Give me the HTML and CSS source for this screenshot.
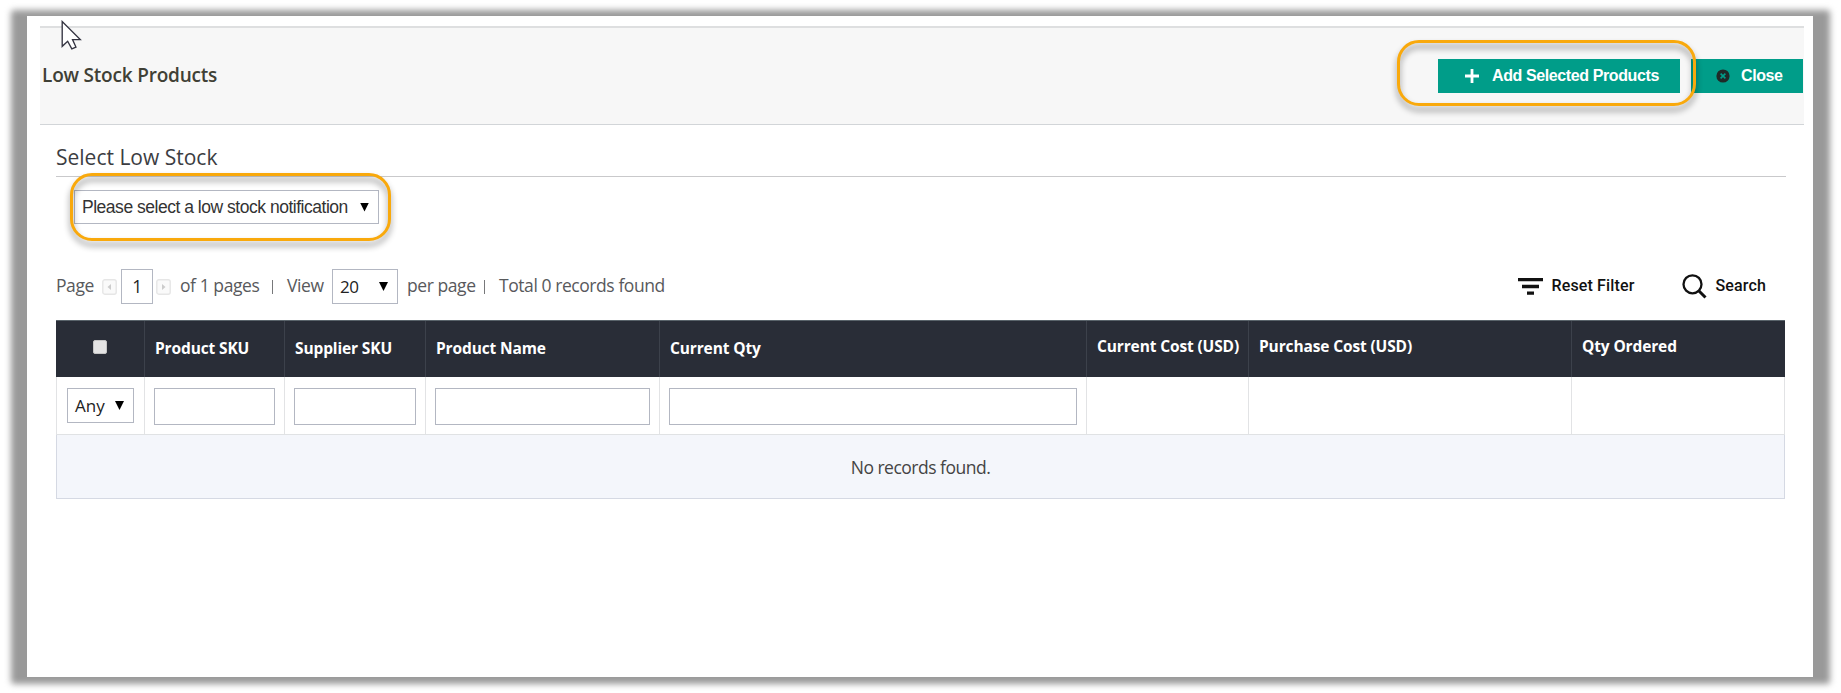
FILE: index.html
```html
<!DOCTYPE html>
<html lang="en">
<head>
<meta charset="utf-8">
<title>Low Stock Products</title>
<link rel="stylesheet" href="styles.css">
</head>
<body>
<div class="frame">
  <main class="sheet">
    <header class="titlebar">
      <h1>Low Stock Products</h1>
      <div class="actions">
        <button class="btn add">
          <svg class="plus" viewBox="0 0 14 14"><path d="M7 0v14M0 7h14" stroke="#fff" stroke-width="2.8"/></svg>
          <span class="t-add">Add Selected Products</span>
        </button>
        <button class="btn close">
          <svg class="x" viewBox="0 0 14 14"><circle cx="7" cy="7" r="6.6" fill="#1f2a28"/><path d="M4.6 4.6l4.8 4.8M9.4 4.6l-4.8 4.8" stroke="#009d89" stroke-width="1.6"/></svg>
          <span class="t-close">Close</span>
        </button>
      </div>
    </header>
    <section class="content">
      <h2><span>Select Low Stock</span></h2>
      <div class="dropdown notify"><span class="t-notify">Please select a low stock notification</span><i class="caret"></i></div>
      <div class="toolbar">
        <span class="t-page">Page</span>
        <svg class="nav prev" viewBox="0 0 15 16"><rect x=".8" y=".8" width="13.4" height="14.4" rx="2" fill="#fafafa" stroke="#e6e6e6" stroke-width="1.4"/><path d="M9 5v6L5.500 8z" fill="#ccc"/></svg>
        <span class="pagebox">1</span>
        <svg class="nav next" viewBox="0 0 15 16"><rect x=".8" y=".8" width="13.4" height="14.4" rx="2" fill="#fafafa" stroke="#e6e6e6" stroke-width="1.4"/><path d="M6 5v6L9.500 8z" fill="#ccc"/></svg>
        <span class="t-of">of 1 pages</span>
        <i class="bar bar1"></i>
        <span class="t-view">View</span>
        <div class="dropdown size"><span>20</span><i class="caret"></i></div>
        <span class="t-per">per page</span>
        <i class="bar bar2"></i>
        <span class="t-total">Total 0 records found</span>
        <div class="tools">
          <svg class="filter" viewBox="0 0 25 17"><path d="M0 1.700h25M4 8.500h17M9 15.200h7" stroke="#111" stroke-width="3.300"/></svg>
          <b class="t-reset">Reset Filter</b>
          <svg class="lens" viewBox="0 0 25 25"><circle cx="10.500" cy="10.300" r="9" fill="none" stroke="#111" stroke-width="2.300"/><path d="M16.500 16.500l7 7" stroke="#111" stroke-width="3"/></svg>
          <b class="t-search">Search</b>
        </div>
      </div>
      <div class="grid">
        <div class="row head">
          <div class="check"><i class="box"></i></div>
          <div><span class="h1">Product SKU</span></div>
          <div><span class="h2">Supplier SKU</span></div>
          <div><span class="h3">Product Name</span></div>
          <div><span class="h4">Current Qty</span></div>
          <div class="up"><span class="h5">Current Cost (USD)</span></div>
          <div class="up"><span class="h6">Purchase Cost (USD)</span></div>
          <div class="up"><span class="h7">Qty Ordered</span></div>
        </div>
        <div class="row filters">
          <div><div class="dropdown any"><span>Any</span><i class="caret"></i></div></div>
          <div><i class="field"></i></div>
          <div><i class="field"></i></div>
          <div><i class="field"></i></div>
          <div><i class="field"></i></div>
          <div></div><div></div><div></div>
        </div>
        <div class="empty"><span class="t-none">No records found.</span></div>
      </div>
    </section>
  </main>
</div>
<div class="callout callout-add"></div>
<div class="callout callout-select"></div>
<svg class="cursor" viewBox="0 0 20 30"><path d="M1 1.500V25.500L6.300 20.600L10.300 28L14.300 26.200L11 19H18.500Z" fill="#fff" stroke="#333340" stroke-width="1.300"/></svg>
</body>
</html>
```

FILE: styles.css
```css
* { box-sizing: border-box; }
body { margin: 0; height: 693px; background: #fff; overflow: hidden; position: relative;
  font-family: "Open Sans", "Noto Sans", sans-serif; }
h1, h2 { margin: 0; font-weight: 400; }
span, b { white-space: nowrap; }
svg, i { display: block; flex: none; }
.frame { position: relative; height: 693px; padding: 16px 28px 16px 27px; }
.frame::before { content: ""; position: absolute; inset: 10px 11px 9px 11px; background: #999; border-radius: 3px; filter: blur(3px); }
.sheet { position: relative; height: 661px; background: #fff; padding: 10px 9px 0 13px; }

.titlebar { height: 99px; background: #f7f7f7; border-top: 2px solid #dedfe0; border-bottom: 1px solid #d2d5d8;
  display: flex; justify-content: space-between; padding-left: 2px; padding-right: 1px; }
h1 { font-size: 19px; font-weight: 600; line-height: 26px; letter-spacing: -.2px; color: #3f4035; margin-top: 34px; }
.actions { display: flex; gap: 11px; margin-top: 31px; }
.btn { height: 34px; border: 0; padding: 0 0 1px; background: #009d89; color: #fff; display: flex; align-items: center;
  font: bold 16px "Liberation Sans", Arial, sans-serif; letter-spacing: -.39px; }
.add { width: 242px; padding-left: 27px; }
.close { width: 112px; padding-left: 25px; }
.plus { width: 14px; height: 14px; margin-right: 13px; }
.x { width: 14px; height: 14px; margin-right: 11px; }

.content { padding: 0 18px 0 16px; }
h2 { height: 52px; padding-top: 18px; font-size: 21px; line-height: 28px; color: #3c3d42; border-bottom: 1px solid #c9c9cb; }
.dropdown { display: flex; align-items: center; justify-content: space-between; background: #fff; border: 1px solid #b3b7c2; color: #222; font-size: 17px; }
.caret { width: 9px; height: 9px; background: #000; clip-path: polygon(0 0, 100% 0, 50% 100%); }
.notify { width: 305px; height: 34px; margin: 13px 0 0 18px; padding: 0 9px 0 7px; font-family: "Liberation Sans", Arial, sans-serif; font-size: 17.5px; letter-spacing: -.48px; color: #333; }
.notify span { padding-top: 1px; }

.toolbar { display: flex; align-items: center; height: 35px; margin-top: 45px; color: #58595c; font-size: 17.5px; letter-spacing: -.43px; }
.toolbar > span { line-height: 24px; padding-bottom: 3px; }
.nav { width: 15px; height: 16px; }
.t-page { width: 46px; }
.toolbar > .pagebox { width: 32px; height: 35px; margin: 0 3px 0 4px; border: 1px solid #b3b7c2; color: #222; text-align: center; padding-top: 4px; }
.t-of { margin-left: 9px; width: 92px; }
.bar { width: 1px; height: 14px; background: #77787a; }
.t-view { margin-left: 14px; width: 45px; }
.size { width: 66px; height: 35px; padding: 0 9px 0 7px; margin-right: 9px; }
.size span, .any span { padding-bottom: 1px; }
.t-per { width: 77px; }
.t-total { margin-left: 14px; }
.tools { margin-left: auto; display: flex; align-items: center; padding-right: 20px; letter-spacing: 0; }
.tools b { font: 500 16px Roboto, sans-serif; color: #111; padding-bottom: 2px; letter-spacing: .15px; }
.filter { width: 25px; height: 17px; margin-right: 8px; }
.t-reset { width: 131px; }
.lens { width: 25px; height: 25px; margin-right: 8px; }

.grid { margin-top: 16px; width: 1729px; }
.row { display: grid; grid-template-columns: 89px 140px 141px 234px 427px 162px 323px 213px; }
.head { height: 57px; background: #292d37; border-top: 1px solid #59636a; color: #fff; font-size: 15.5px; letter-spacing: -.13px; font-weight: 700; }
.head > div { padding: 16px 0 0 10px; line-height: 22px; border-right: 1px solid #3c414b; }
.head > .up { padding-top: 14px; }
.head > div:last-child { border-right: 0; }
.head > .check { padding: 19px 0 0 37px; }
.box { width: 14px; height: 14px; border: 1px solid #c5c5c5; border-radius: 2px; background: #e4e4e4; }
.filters { height: 58px; border-left: 1px solid #e2e3e5; grid-template-columns: 88px 140px 141px 234px 427px 162px 323px 213px; border-bottom: 1px solid #e0e2e4; }
.filters > div { border-right: 1px solid #e2e3e5; padding: 11px 9px 0 9px; }
.filters > div:first-child { padding-left: 10px; }
.any { width: 67px; height: 35px; padding: 0 9px 0 7px; }
.field { height: 37px; border: 1px solid #b3b7c2; background: #fff; }
.empty { height: 64px; background: #f4f6fb; border: 1px solid #d5d9e3; border-top: 0; display: flex; justify-content: center; align-items: center; color: #444; font-size: 17.5px; letter-spacing: -.5px; }

.callout { position: absolute; border: 3px solid #f9a90c; border-radius: 22px; filter: drop-shadow(0 5px 3px rgba(0,0,0,.45)); }
.callout-add { left: 1397px; top: 40px; width: 299px; height: 66px; }
.callout-select { left: 70px; top: 173px; width: 321px; height: 68px; }
.cursor { position: absolute; left: 61px; top: 20px; width: 21px; height: 31px; }
```
